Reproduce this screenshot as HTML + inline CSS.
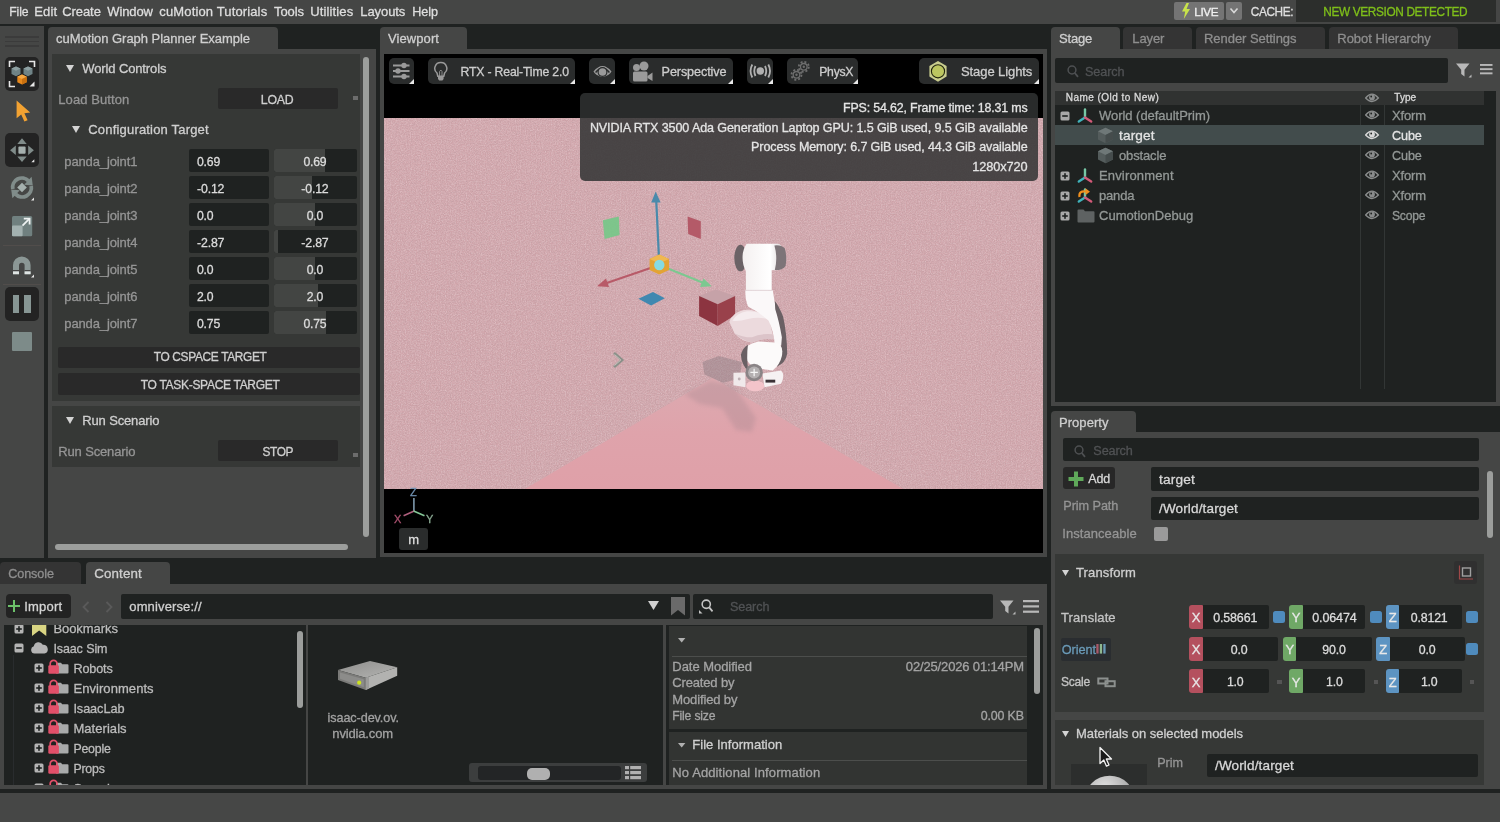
<!DOCTYPE html>
<html lang="en"><head><meta charset="utf-8"><title>Isaac Sim - cuMotion Graph Planner Example</title>
<style>
html,body{margin:0;padding:0;background:#1f2221;overflow:hidden}
body{width:1500px;height:822px;position:relative;font-family:"Liberation Sans", "DejaVu Sans", sans-serif;font-size:13px;color:#cfcfcf}
.b{position:absolute;box-sizing:border-box;display:block}
.t{position:absolute;white-space:pre;line-height:18px;height:18px;display:block;-webkit-text-stroke:0.3px}
</style></head><body>
<div class="b" id="root" style="left:0;top:0;width:1500px;height:822px;will-change:transform;overflow:hidden">
<div class="b " style="left:0px;top:0px;width:1500px;height:24px;background:#454645;"></div>
<span class="t" style="left:9.30px;top:2.70px;color:#dedede;font-size:12.2px;letter-spacing:-0.160px;">File</span>
<span class="t" style="left:34.30px;top:2.70px;color:#dedede;font-size:13px;letter-spacing:0.148px;">Edit</span>
<span class="t" style="left:62.30px;top:2.70px;color:#dedede;font-size:13px;letter-spacing:-0.089px;">Create</span>
<span class="t" style="left:107.30px;top:2.70px;color:#dedede;font-size:13px;letter-spacing:-0.125px;">Window</span>
<span class="t" style="left:159.30px;top:2.70px;color:#dedede;font-size:13px;letter-spacing:0.139px;">cuMotion Tutorials</span>
<span class="t" style="left:274.00px;top:2.70px;color:#dedede;font-size:13px;letter-spacing:-0.072px;">Tools</span>
<span class="t" style="left:310.30px;top:2.70px;color:#dedede;font-size:13px;letter-spacing:0.122px;">Utilities</span>
<span class="t" style="left:360.30px;top:2.70px;color:#dedede;font-size:13px;letter-spacing:-0.078px;">Layouts</span>
<span class="t" style="left:412.30px;top:2.70px;color:#dedede;font-size:12.6px;letter-spacing:-0.102px;">Help</span>
<div class="b " style="left:1174px;top:2px;width:50px;height:18px;background:#747474;border-radius:2px"></div>
<svg class="b" style="left:1181px;top:3px;" width="10" height="16" viewBox="0 0 10 16"><path d="M5.5 0 L1 8.5 L4.2 8.5 L2.8 16 L9 6 L5.6 6 L8 0 Z" fill="#c8e34a"/></svg>
<span class="t" style="left:1194.30px;top:2.50px;color:#f0f0f0;font-size:11.71px;letter-spacing:-0.344px;">LIVE</span>
<div class="b " style="left:1226px;top:2px;width:16px;height:18px;background:#747474;border-radius:2px"></div>
<svg class="b" style="left:1229px;top:7px;" width="10" height="8" viewBox="0 0 10 8"><path d="M1.5 1.5 L5 5.5 L8.5 1.5" stroke="#d8d8d8" stroke-width="1.6" fill="none"/></svg>
<span class="t" style="left:1250.70px;top:2.70px;color:#dedede;font-size:11.85px;letter-spacing:-0.358px;">CACHE:</span>
<div class="b " style="left:1296px;top:0px;width:199.5px;height:22px;background:#2c2e2c;"></div>
<span class="t" style="left:1323.30px;top:2.70px;color:#7fbf1a;font-size:11.85px;letter-spacing:-0.368px;">NEW VERSION DETECTED</span>
<div class="b " style="left:0px;top:26px;width:44px;height:532px;background:#454645;"></div>
<div class="b " style="left:5.4px;top:36px;width:33.4px;height:1.7px;background:#3b3b3b;"></div>
<div class="b " style="left:5.4px;top:40.6px;width:33.4px;height:1.7px;background:#3b3b3b;"></div>
<div class="b " style="left:5.4px;top:45.2px;width:33.4px;height:1.7px;background:#3b3b3b;"></div>
<div class="b " style="left:48px;top:27px;width:230px;height:23px;background:#454645;border-radius:4px 4px 0 0"></div>
<div class="b " style="left:48px;top:49px;width:328px;height:509px;background:#454645;"></div>
<span class="t" style="left:56.00px;top:29.50px;color:#cfcfcf;font-size:13px;letter-spacing:-0.037px;">cuMotion Graph Planner Example</span>
<div class="b " style="left:52px;top:54px;width:308px;height:347px;background:#363836;"></div>
<svg class="b" style="left:66px;top:65px;" width="8" height="7" viewBox="0 0 8 7"><path d="M0 0 L8 0 L4 7 Z" fill="#d4d4d4"/></svg>
<span class="t" style="left:82.30px;top:60.00px;color:#cfcfcf;font-size:13px;letter-spacing:-0.124px;">World Controls</span>
<span class="t" style="left:58.30px;top:91.00px;color:#959595;font-size:13px;letter-spacing:0.080px;">Load Button</span>
<div class="b " style="left:218.3px;top:88.3px;width:119.4px;height:21px;background:#292929;border-radius:2px"></div>
<span class="t" style="left:260.82px;top:90.60px;color:#cfcfcf;font-size:12.3px;letter-spacing:-0.250px;">LOAD</span>
<div class="b " style="left:353.3px;top:95.7px;width:4.4px;height:4.4px;background:#6c6c6c;"></div>
<svg class="b" style="left:72px;top:126px;" width="8" height="7" viewBox="0 0 8 7"><path d="M0 0 L8 0 L4 7 Z" fill="#d4d4d4"/></svg>
<span class="t" style="left:88.30px;top:121.00px;color:#cfcfcf;font-size:13px;letter-spacing:0.183px;">Configuration Target</span>
<span class="t" style="left:64.30px;top:152.70px;color:#959595;font-size:13px;letter-spacing:-0.122px;">panda_joint1</span>
<div class="b " style="left:189px;top:149.0px;width:79.7px;height:23.4px;background:#1f2221;border-radius:2px"></div>
<span class="t" style="left:197.00px;top:152.70px;color:#dcdcdc;font-size:12.22px;letter-spacing:-0.195px;">0.69</span>
<div class="b " style="left:274px;top:149.0px;width:82.7px;height:23.4px;background:#1f2221;border-radius:2px"></div>
<div class="b " style="left:274px;top:149.0px;width:51px;height:23.4px;background:#434543;border-radius:2px 0 0 2px"></div>
<span class="t" style="left:303.40px;top:152.70px;color:#dcdcdc;font-size:12.22px;letter-spacing:-0.195px;">0.69</span>
<span class="t" style="left:64.30px;top:179.70px;color:#959595;font-size:13px;letter-spacing:-0.122px;">panda_joint2</span>
<div class="b " style="left:189px;top:176.0px;width:79.7px;height:23.4px;background:#1f2221;border-radius:2px"></div>
<span class="t" style="left:197.00px;top:179.70px;color:#dcdcdc;font-size:12.32px;letter-spacing:-0.156px;">-0.12</span>
<div class="b " style="left:274px;top:176.0px;width:82.7px;height:23.4px;background:#1f2221;border-radius:2px"></div>
<div class="b " style="left:274px;top:176.0px;width:37.69999999999999px;height:23.4px;background:#434543;border-radius:2px 0 0 2px"></div>
<span class="t" style="left:301.27px;top:179.70px;color:#dcdcdc;font-size:12.32px;letter-spacing:-0.156px;">-0.12</span>
<span class="t" style="left:64.30px;top:206.70px;color:#959595;font-size:13px;letter-spacing:-0.122px;">panda_joint3</span>
<div class="b " style="left:189px;top:203.0px;width:79.7px;height:23.4px;background:#1f2221;border-radius:2px"></div>
<span class="t" style="left:197.00px;top:206.70px;color:#dcdcdc;font-size:12.2px;letter-spacing:-0.184px;">0.0</span>
<div class="b " style="left:274px;top:203.0px;width:82.7px;height:23.4px;background:#1f2221;border-radius:2px"></div>
<div class="b " style="left:274px;top:203.0px;width:41px;height:23.4px;background:#434543;border-radius:2px 0 0 2px"></div>
<span class="t" style="left:306.71px;top:206.70px;color:#dcdcdc;font-size:12.2px;letter-spacing:-0.184px;">0.0</span>
<span class="t" style="left:64.30px;top:233.70px;color:#959595;font-size:13px;letter-spacing:-0.122px;">panda_joint4</span>
<div class="b " style="left:189px;top:230.0px;width:79.7px;height:23.4px;background:#1f2221;border-radius:2px"></div>
<span class="t" style="left:197.00px;top:233.70px;color:#dcdcdc;font-size:12.32px;letter-spacing:-0.156px;">-2.87</span>
<div class="b " style="left:274px;top:230.0px;width:82.7px;height:23.4px;background:#1f2221;border-radius:2px"></div>
<div class="b " style="left:274px;top:230.0px;width:4.300000000000011px;height:23.4px;background:#434543;border-radius:2px 0 0 2px"></div>
<span class="t" style="left:301.27px;top:233.70px;color:#dcdcdc;font-size:12.32px;letter-spacing:-0.156px;">-2.87</span>
<span class="t" style="left:64.30px;top:260.70px;color:#959595;font-size:13px;letter-spacing:-0.122px;">panda_joint5</span>
<div class="b " style="left:189px;top:257.0px;width:79.7px;height:23.4px;background:#1f2221;border-radius:2px"></div>
<span class="t" style="left:197.00px;top:260.70px;color:#dcdcdc;font-size:12.2px;letter-spacing:-0.184px;">0.0</span>
<div class="b " style="left:274px;top:257.0px;width:82.7px;height:23.4px;background:#1f2221;border-radius:2px"></div>
<div class="b " style="left:274px;top:257.0px;width:41px;height:23.4px;background:#434543;border-radius:2px 0 0 2px"></div>
<span class="t" style="left:306.71px;top:260.70px;color:#dcdcdc;font-size:12.2px;letter-spacing:-0.184px;">0.0</span>
<span class="t" style="left:64.30px;top:287.70px;color:#959595;font-size:13px;letter-spacing:-0.122px;">panda_joint6</span>
<div class="b " style="left:189px;top:284.0px;width:79.7px;height:23.4px;background:#1f2221;border-radius:2px"></div>
<span class="t" style="left:197.00px;top:287.70px;color:#dcdcdc;font-size:12.2px;letter-spacing:-0.184px;">2.0</span>
<div class="b " style="left:274px;top:284.0px;width:82.7px;height:23.4px;background:#1f2221;border-radius:2px"></div>
<div class="b " style="left:274px;top:284.0px;width:44.30000000000001px;height:23.4px;background:#434543;border-radius:2px 0 0 2px"></div>
<span class="t" style="left:306.71px;top:287.70px;color:#dcdcdc;font-size:12.2px;letter-spacing:-0.184px;">2.0</span>
<span class="t" style="left:64.30px;top:314.70px;color:#959595;font-size:13px;letter-spacing:-0.122px;">panda_joint7</span>
<div class="b " style="left:189px;top:311.0px;width:79.7px;height:23.4px;background:#1f2221;border-radius:2px"></div>
<span class="t" style="left:197.00px;top:314.70px;color:#dcdcdc;font-size:12.22px;letter-spacing:-0.195px;">0.75</span>
<div class="b " style="left:274px;top:311.0px;width:82.7px;height:23.4px;background:#1f2221;border-radius:2px"></div>
<div class="b " style="left:274px;top:311.0px;width:52px;height:23.4px;background:#434543;border-radius:2px 0 0 2px"></div>
<span class="t" style="left:303.40px;top:314.70px;color:#dcdcdc;font-size:12.22px;letter-spacing:-0.195px;">0.75</span>
<div class="b " style="left:58.3px;top:346.7px;width:301.7px;height:21.6px;background:#292929;border-radius:2px"></div>
<span class="t" style="left:153.78px;top:348.30px;color:#cfcfcf;font-size:11.9px;letter-spacing:-0.334px;">TO CSPACE TARGET</span>
<div class="b " style="left:58.3px;top:373.3px;width:301.7px;height:21.7px;background:#292929;border-radius:2px"></div>
<span class="t" style="left:140.80px;top:375.70px;color:#cfcfcf;font-size:12.01px;letter-spacing:-0.300px;">TO TASK-SPACE TARGET</span>
<div class="b " style="left:52px;top:406.3px;width:308px;height:61px;background:#363836;"></div>
<svg class="b" style="left:66px;top:417px;" width="8" height="7" viewBox="0 0 8 7"><path d="M0 0 L8 0 L4 7 Z" fill="#d4d4d4"/></svg>
<span class="t" style="left:82.30px;top:411.70px;color:#cfcfcf;font-size:13px;letter-spacing:-0.148px;">Run Scenario</span>
<span class="t" style="left:58.30px;top:442.70px;color:#959595;font-size:13px;letter-spacing:-0.148px;">Run Scenario</span>
<div class="b " style="left:218.3px;top:440px;width:119.4px;height:21.3px;background:#292929;border-radius:2px"></div>
<span class="t" style="left:262.56px;top:443.00px;color:#cfcfcf;font-size:11.85px;letter-spacing:-0.387px;">STOP</span>
<div class="b " style="left:353.3px;top:452.6px;width:4.4px;height:4.4px;background:#6c6c6c;"></div>
<div class="b " style="left:363.3px;top:57px;width:5.6px;height:480.3px;background:#9c9e9c;border-radius:3px"></div>
<div class="b " style="left:55px;top:544px;width:293.3px;height:6px;background:#9c9e9c;border-radius:3px"></div>
<div class="b " style="left:4.9px;top:56.8px;width:34px;height:34.2px;background:#232323;border-radius:5px"></div>
<svg class="b" style="left:4.9px;top:56.8px;" width="34" height="34.2" viewBox="0 0 34 34.2">
<g fill="none" stroke="#e6e6e6" stroke-width="1.6"><path d="M4.5 10 V4.5 H10"/><path d="M24 4.5 H29.5 V10"/><path d="M4.5 24 V29.5 H10"/></g>
<path d="M29.5 24.5 V29.5 H24.5 Z" fill="#e6e6e6"/>
<path d="M11 9.5 L15.5 11.6 V17 L11 19.2 L6.5 17 V11.6 Z" fill="#6f8386"/><path d="M11 9.5 L15.5 11.6 L11 13.8 L6.5 11.6 Z" fill="#8ea0a2"/>
<path d="M23 9.5 L27.5 11.6 V17 L23 19.2 L18.500 17 V11.6 Z" fill="#6f8386"/><path d="M23 9.5 L27.5 11.6 L23 13.8 L18.5 11.6 Z" fill="#8ea0a2"/>
<path d="M17 17.5 L21.7 19.7 V25.2 L17 27.5 L12.3 25.2 V19.700 Z" fill="#e8891c"/><path d="M17 17.5 L21.7 19.7 L17 22 L12.3 19.7 Z" fill="#f7a944"/><path d="M17 22 L21.7 19.7 V25.2 L17 27.5 Z" fill="#c9700f"/>
</svg>
<svg class="b" style="left:14px;top:99px;" width="20" height="26" viewBox="0 0 20 26"><path d="M2.6 1.6 L2.6 19.2 L7.2 15.4 L10.4 22.6 L13.6 21.2 L10.4 14.2 L16.2 13.6 Z" fill="#f2a232"/></svg>
<div class="b " style="left:4.9px;top:132.7px;width:34px;height:34.2px;background:#232323;border-radius:5px"></div>
<svg class="b" style="left:4.9px;top:132.7px;" width="34" height="34" viewBox="0 0 34 34"><g fill="#808c8a"><path d="M17 5.300 L21.700 11 H12.300 Z"/><path d="M17 29.100 L21.700 23.400 H12.300 Z"/><path d="M5.100 17.200 L10.800 12.500 V21.900 Z"/><path d="M28.900 17.200 L23.200 12.500 V21.900 Z"/></g>
<rect x="13.400" y="13.600" width="7.200" height="7.200" rx="1" fill="#a5b0ae"/>
<path d="M29.300 26.300 V29.300 H26.300 Z" fill="#e6e6e6"/></svg>
<svg class="b" style="left:9px;top:174px;" width="26" height="28" viewBox="0 0 26 28"><g fill="none" stroke="#808c8a" stroke-width="3.800"><path d="M3.800 15 A9.200 9.200 0 0 1 19.500 6.900"/><path d="M22.200 12 A9.200 9.200 0 0 1 6.500 20.100"/></g>
<path d="M15.200 10.800 L23.800 11.600 L22.600 2.800 Z" fill="#808c8a"/><path d="M10.800 16.200 L2.200 15.400 L3.400 24.200 Z" fill="#808c8a"/>
<path d="M13 8.700 L17.800 13.500 L13 18.300 L8.200 13.500 Z" fill="#a5b0ae"/><path d="M25 23.500 V26.500 H22 Z" fill="#e6e6e6"/></svg>
<svg class="b" style="left:12px;top:215.5px;" width="21" height="21" viewBox="0 0 21 21"><rect x="0" y="0" width="20.2" height="20.2" rx="1.5" fill="#70807f"/><rect x="0" y="9.6" width="10.6" height="10.6" rx="1" fill="#a3b1b0"/>
<path d="M10.5 9.700 L17 3.2" stroke="#eef2f2" stroke-width="1.8"/><path d="M11.8 2.6 H17.6 V8.4" fill="none" stroke="#eef2f2" stroke-width="1.8"/></svg>
<div class="b " style="left:3px;top:244.6px;width:38px;height:1px;background:#514d4b;"></div>
<svg class="b" style="left:12px;top:256px;" width="22" height="22" viewBox="0 0 22 22"><path d="M1 18.2 V9.2 A8.3 8.3 0 0 1 18.6 9.2 V18.2 H12.600 V9.600 A2.8 2.8 0 0 0 7 9.600 V18.2 Z" fill="#8b9795"/>
<rect x="1" y="14" width="6" height="1.400" fill="#454545"/><rect x="12.6" y="14" width="6" height="1.400" fill="#454545"/>
<rect x="1" y="15.4" width="6" height="2.8" fill="#dfe4e3"/><rect x="12.6" y="15.4" width="6" height="2.8" fill="#dfe4e3"/><path d="M22 18.500 V21.5 H19 Z" fill="#e6e6e6"/></svg>
<div class="b " style="left:3px;top:283.5px;width:38px;height:1px;background:#514d4b;"></div>
<div class="b " style="left:4.9px;top:287.2px;width:34px;height:33.8px;background:#232323;border-radius:5px"></div>
<div class="b " style="left:12.6px;top:295px;width:6.9px;height:18.2px;background:#879694;"></div>
<div class="b " style="left:23.7px;top:295px;width:7.4px;height:18.2px;background:#879694;"></div>
<div class="b " style="left:12px;top:332.3px;width:19.7px;height:19.1px;background:#7d8b89;border-radius:1px"></div>
<div class="b " style="left:380px;top:27px;width:87px;height:23px;background:#454645;border-radius:4px 4px 0 0"></div>
<span class="t" style="left:388.00px;top:29.50px;color:#cfcfcf;font-size:13px;letter-spacing:0.082px;">Viewport</span>
<div class="b " style="left:380px;top:49px;width:667px;height:508px;background:#454645;"></div>
<div class="b " style="left:384px;top:54px;width:659px;height:499px;background:#000;"></div>
<svg class="b" style="left:384px;top:118.3px;overflow:hidden" width="659" height="370.7" viewBox="0 0 659 370.7">
<defs>
<filter id="nz" x="0" y="0" width="100%" height="100%"><feTurbulence type="fractalNoise" baseFrequency="0.9" numOctaves="2" seed="3" result="n"/><feColorMatrix in="n" type="matrix" values="0 0 0 0 0.42  0 0 0 0 0.3  0 0 0 0 0.32  0.9 0.9 0.9 0 -1.1"/></filter>
<filter id="nz2" x="0" y="0" width="100%" height="100%"><feTurbulence type="fractalNoise" baseFrequency="0.8" numOctaves="2" seed="11" result="n"/><feColorMatrix in="n" type="matrix" values="0 0 0 0 0.96  0 0 0 0 0.84  0 0 0 0 0.86  0.9 0.9 0.9 0 -1.1"/></filter>
<linearGradient id="gr" x1="0" y1="0" x2="0" y2="1"><stop offset="0" stop-color="#d1a5ab"/><stop offset="1" stop-color="#d0a4aa"/></linearGradient>
<linearGradient id="wg" x1="0" y1="0" x2="0" y2="1"><stop offset="0" stop-color="#dcaab0"/><stop offset="0.5" stop-color="#dfa3ab"/><stop offset="1" stop-color="#dfa0a8"/></linearGradient><filter id="bl"><feGaussianBlur stdDeviation="2.200"/></filter>
<linearGradient id="rb" x1="0" y1="0" x2="1" y2="0"><stop offset="0" stop-color="#f4f0f0"/><stop offset="0.7" stop-color="#ffffff"/><stop offset="1" stop-color="#dcd6d8"/></linearGradient>
</defs>
<rect width="659" height="371" fill="url(#gr)"/>
<rect width="659" height="371" filter="url(#nz)" opacity="0.4"/>
<rect width="659" height="371" filter="url(#nz2)" opacity="0.4"/>
<path d="M141 371 L328.600 260.100 L519.200 371 Z" fill="url(#wg)"/>
<path d="M300 276 L327 263 L350 268 L372 300 L368 314 L352 312 L338 290 L316 286 Z" fill="#9a8088" opacity="0.28" filter="url(#bl)"/>
<!-- gizmo -->
<path d="M272.300 84 L275 140" stroke="#4a8aab" stroke-width="2.200"/><path d="M271.700 73.500 L276.600 84.500 H267.200 Z" fill="#4a8aab"/>
<path d="M268 149.500 L222 165.200" stroke="#b85a68" stroke-width="2"/><path d="M213 168.200 L222 160.500 L225 169 Z" fill="#b85a68"/>
<path d="M284 150.500 L319 164.800" stroke="#7cc890" stroke-width="2"/><path d="M327.800 168.200 L316 169 L319.500 160.500 Z" fill="#7cc890"/>
<path d="M218.800 102.300 L234.800 98.600 L235.600 116.900 L220.600 121.100 Z" fill="#74c887" opacity="0.9"/>
<path d="M303.600 98.600 L316.800 103.200 V121.100 L304.200 116 Z" fill="#b45a68"/>
<path d="M254.400 180.700 L269 174 L280.800 180.200 L267.100 187.500 Z" fill="#4088b0"/>
<path d="M275.300 136.500 L285 141 V152 L275.300 156.500 L265.600 152 V141 Z" fill="#e3a334"/><path d="M275.300 136.500 L285 141 L275.300 145.500 L265.600 141 Z" fill="#f0b850"/>
<circle cx="275.300" cy="147" r="5.200" fill="#86dbe3"/>
<!-- obstacle cube -->
<path d="M315.100 178 L331.900 171.600 L351.100 178 L333.700 186.200 Z" fill="#c6a2a8"/><path d="M315.100 178 L333.700 186.200 V208.100 L315.100 198.100 Z" fill="#8c3440"/><path d="M333.700 186.200 L351.100 178 V197.200 L333.700 208.100 Z" fill="#99414b"/>
<!-- robot -->
<g transform="translate(306,111.7) scale(0.2069)">
<path d="M60 640 L140 610 L250 640 L240 720 L160 740 L70 700 Z" fill="#8a7a80" opacity="0.45"/>
<path d="M190 445 Q205 400 260 388 Q330 380 385 440 L405 530 Q350 520 300 545 Q250 540 215 500 Z" fill="#ecdadd"/>
<path d="M205 440 Q225 402 275 394 Q335 390 380 432 Q330 420 280 432 Q235 445 205 440 Z" fill="#f5ecee"/><path d="M215 500 Q250 535 300 545 Q350 522 405 530 L400 505 Q340 500 300 520 Q250 520 215 500 Z" fill="#dcc4c9"/>
<ellipse cx="244" cy="137" rx="30" ry="64" fill="#6b6266"/>
<path d="M274 68 H425 Q445 70 445 100 V170 Q445 196 425 196 H395 V292 H270 V200 Q254 170 254 135 Q254 95 274 68 Z" fill="url(#rb)"/>
<path d="M408 76 Q440 72 458 90 Q470 130 462 175 Q450 196 410 195 Q425 135 408 76 Z" fill="#7d7478"/>
<path d="M268 293 H400 Q408 350 420 400 Q445 450 455 520 L462 560 L410 560 Q405 490 380 440 Q330 395 282 372 Q266 340 268 293 Z" fill="#fbf8f9"/>
<path d="M268 293 H400" stroke="#d9cfd2" stroke-width="3"/>
<path d="M410 345 Q430 370 450 420 Q468 500 470 600 Q462 645 420 662 Q440 600 444 520 Q430 440 412 385 Z" fill="#6a6064"/>
<path d="M250 600 Q262 555 330 540 L410 545 Q455 552 444 610 Q436 650 400 680 L340 672 L290 650 Z" fill="#fcfafa"/>
<path d="M246 605 Q255 570 280 556 Q272 620 282 682 Q250 660 246 605 Z" fill="#6a6064"/>
<path d="M210 692 L268 690 L268 762 L210 752 Z" fill="#f0e9ea"/><circle cx="238" cy="722" r="7" fill="#bdb0b4"/>
<path d="M350 695 L440 680 Q462 700 440 745 L360 762 Z" fill="#f6f1f2"/>
<rect x="365" y="725" width="47" height="14" fill="#3a3236"/>
<ellipse cx="315" cy="755" rx="44" ry="26" fill="#f3c4ca"/>
<circle cx="310" cy="690" r="42" fill="#8a8486"/><circle cx="310" cy="690" r="29" fill="#b4b0b1"/><path d="M292 690 H328 M310 672 V708" stroke="#f6f6f6" stroke-width="6"/>
</g>
<path d="M230 235 L238 242 L230 249" stroke="#8b9089" stroke-width="2.800" fill="none"/><path d="M230.500 236.500 L236.800 242 L230.500 247.500" stroke="#cfc8c4" stroke-width="0.900" fill="none"/>
</svg>
<div class="b " style="left:580px;top:92.8px;width:458px;height:88px;background:rgba(48,50,50,0.85);border-radius:5px"></div>
<span class="t" style="left:843.05px;top:98.50px;color:#e4e4e4;font-size:12.39px;letter-spacing:-0.145px;">FPS: 54.62, Frame time: 18.31 ms</span>
<span class="t" style="left:589.90px;top:118.60px;color:#e4e4e4;font-size:12.56px;letter-spacing:-0.105px;">NVIDIA RTX 3500 Ada Generation Laptop GPU: 1.5 GiB used, 9.5 GiB available</span>
<span class="t" style="left:751.09px;top:137.90px;color:#e4e4e4;font-size:12.53px;letter-spacing:-0.109px;">Process Memory: 6.7 GiB used, 44.3 GiB available</span>
<span class="t" style="left:972.23px;top:158.00px;color:#e4e4e4;font-size:12.74px;letter-spacing:-0.069px;">1280x720</span>
<div class="b " style="left:388.5px;top:58px;width:25.4px;height:25.8px;background:#2a2c2c;border-radius:5px"></div>
<svg class="b" style="left:408.9px;top:78.8px;" width="5" height="5" viewBox="0 0 5 5"><path d="M5 0 V5 H0 Z" fill="#e8e8e8"/></svg>
<div class="b " style="left:428px;top:58px;width:147.2px;height:25.8px;background:#2a2c2c;border-radius:5px"></div>
<svg class="b" style="left:570.2px;top:78.8px;" width="5" height="5" viewBox="0 0 5 5"><path d="M5 0 V5 H0 Z" fill="#e8e8e8"/></svg>
<div class="b " style="left:589.1px;top:58px;width:26.1px;height:25.8px;background:#2a2c2c;border-radius:5px"></div>
<svg class="b" style="left:610.2px;top:78.8px;" width="5" height="5" viewBox="0 0 5 5"><path d="M5 0 V5 H0 Z" fill="#e8e8e8"/></svg>
<div class="b " style="left:629.3px;top:58px;width:104px;height:25.8px;background:#2a2c2c;border-radius:5px"></div>
<svg class="b" style="left:728.3px;top:78.8px;" width="5" height="5" viewBox="0 0 5 5"><path d="M5 0 V5 H0 Z" fill="#e8e8e8"/></svg>
<div class="b " style="left:747.2px;top:58px;width:25.9px;height:25.8px;background:#2a2c2c;border-radius:5px"></div>
<svg class="b" style="left:768.1px;top:78.8px;" width="5" height="5" viewBox="0 0 5 5"><path d="M5 0 V5 H0 Z" fill="#e8e8e8"/></svg>
<div class="b " style="left:787.2px;top:58px;width:71.2px;height:25.8px;background:#2a2c2c;border-radius:5px"></div>
<svg class="b" style="left:853.4000000000001px;top:78.8px;" width="5" height="5" viewBox="0 0 5 5"><path d="M5 0 V5 H0 Z" fill="#e8e8e8"/></svg>
<div class="b " style="left:919.2px;top:58px;width:119.8px;height:25.8px;background:#2a2c2c;border-radius:5px"></div>
<svg class="b" style="left:1034.0px;top:78.8px;" width="5" height="5" viewBox="0 0 5 5"><path d="M5 0 V5 H0 Z" fill="#e8e8e8"/></svg>
<svg class="b" style="left:392px;top:61px;" width="19" height="20" viewBox="0 0 19 20"><g stroke="#9a9a9a" stroke-width="1.800"><path d="M1 4.500 H17.500 M1 10 H17.500 M1 15.500 H17.500"/></g><g fill="#9a9a9a"><circle cx="12" cy="4.500" r="2.700"/><circle cx="6" cy="10" r="2.700"/><circle cx="12" cy="15.500" r="2.700"/></g></svg>
<svg class="b" style="left:433px;top:61px;" width="16" height="21" viewBox="0 0 16 21"><path d="M7.800 1.500 A5.900 5.900 0 0 0 4 12 L4.800 15.200 H10.800 L11.600 12 A5.900 5.900 0 0 0 7.800 1.500 Z" fill="none" stroke="#9a9a9a" stroke-width="1.500"/><path d="M5 15.500 H10.600 V18 L9.400 19.500 H6.200 L5 18 Z" fill="#9a9a9a"/><path d="M6.600 15 V10.500 L7.800 9 L9 10.500 V15" fill="none" stroke="#9a9a9a" stroke-width="0.900"/></svg>
<span class="t" style="left:460.50px;top:62.80px;color:#cdcdcd;font-size:12.26px;letter-spacing:-0.176px;">RTX - Real-Time 2.0</span>
<svg class="b" style="left:592.5px;top:62.5px;" width="20" height="18" viewBox="0 0 20 18"><path d="M0.500 8.500 Q9.500 -2.500 18.500 8.500 Q17.500 10.500 15.500 11.800 Q9.500 16 3.500 11.800 Q1.500 10.500 0.500 8.500 Z" fill="#9a9a9a"/><path d="M2.600 9.400 Q9.500 1.300 16.400 9.400" stroke="#2a2c2c" stroke-width="1.500" fill="none"/><circle cx="9.500" cy="9" r="5" fill="#2a2c2c"/><circle cx="9.500" cy="9" r="3.800" fill="#9a9a9a"/></svg>
<svg class="b" style="left:631.5px;top:60.5px;" width="22" height="22" viewBox="0 0 22 22"><g fill="#9a9a9a"><circle cx="4.500" cy="6.500" r="3.500"/><circle cx="12" cy="5" r="4.500"/><rect x="1" y="10.500" width="14.500" height="10" rx="1.500"/><path d="M15.500 15 L20.500 11.500 V20 L15.500 17 Z"/></g></svg>
<span class="t" style="left:661.60px;top:62.80px;color:#cdcdcd;font-size:12.61px;letter-spacing:-0.099px;">Perspective</span>
<svg class="b" style="left:749px;top:62px;" width="23" height="18" viewBox="0 0 23 18"><circle cx="11.300" cy="9" r="3.700" fill="#b0b0b0"/><g fill="none" stroke="#b0b0b0" stroke-width="1.800"><path d="M6.500 4 Q4 9 6.500 14"/><path d="M16 4 Q18.500 9 16 14"/><path d="M3.300 2.500 Q-0.200 9 3.300 15.500"/><path d="M19.300 2.500 Q22.800 9 19.300 15.500"/></g></svg>
<svg class="b" style="left:790px;top:60px;" width="22" height="22" viewBox="0 0 22 22"><g fill="none" stroke="#6e6e6e"><circle cx="13.800" cy="6.800" r="3.300" stroke-width="1.300"/><circle cx="13.800" cy="6.800" r="5" stroke-width="1.800" stroke-dasharray="2 1.930"/><circle cx="6.500" cy="14.800" r="3.300" stroke-width="1.300"/><circle cx="6.500" cy="14.800" r="5" stroke-width="1.800" stroke-dasharray="2 1.930"/></g><circle cx="13.800" cy="6.800" r="1.200" fill="#6e6e6e"/><circle cx="6.500" cy="14.800" r="1.200" fill="#6e6e6e"/></svg>
<span class="t" style="left:819.20px;top:62.80px;color:#cdcdcd;font-size:12.2px;letter-spacing:-0.227px;">PhysX</span>
<svg class="b" style="left:927.5px;top:59.5px;" width="20" height="23" viewBox="0 0 20 23"><path d="M10 1 L18.600 6 V16.500 L10 21.800 L1.400 16.500 V6 Z" fill="#c9cd8e"/><circle cx="10" cy="11.300" r="6.600" fill="#bcc660" stroke="#23260f" stroke-width="1.100"/></svg>
<span class="t" style="left:961.00px;top:62.80px;color:#cdcdcd;font-size:13px;letter-spacing:-0.082px;">Stage Lights</span>
<svg class="b" style="left:390px;top:484px;" width="50" height="44" viewBox="0 0 50 44"><path d="M23.900 14 V27" stroke="#7e99ad" stroke-width="1.600"/><path d="M24.200 27 L13.600 31.700" stroke="#b0607e" stroke-width="1.600"/><path d="M23.600 27 L34.500 31.700" stroke="#84c596" stroke-width="1.600"/></svg>
<span class="t" style="left:409.93px;top:482.50px;color:#6f90b0;font-size:11px;">Z</span>
<span class="t" style="left:394.03px;top:509.60px;color:#a8506e;font-size:11px;">X</span>
<span class="t" style="left:426.03px;top:509.60px;color:#8aa992;font-size:11px;">Y</span>
<div class="b " style="left:399.1px;top:528.1px;width:28.7px;height:21.7px;background:#2a2c2c;border-radius:3px"></div>
<span class="t" style="left:408.18px;top:531.00px;color:#dedede;font-size:13px;">m</span>
<div class="b " style="left:1051px;top:27px;width:69px;height:23px;background:#454645;border-radius:4px 4px 0 0"></div>
<span class="t" style="left:1059.00px;top:29.50px;color:#cfcfcf;font-size:13px;letter-spacing:-0.197px;">Stage</span>
<div class="b " style="left:1123.3px;top:27px;width:69px;height:22px;background:#343434;border-radius:4px 4px 0 0"></div>
<span class="t" style="left:1132.30px;top:29.50px;color:#8e8e8e;font-size:13px;letter-spacing:-0.106px;">Layer</span>
<div class="b " style="left:1195.7px;top:27px;width:129.3px;height:22px;background:#343434;border-radius:4px 4px 0 0"></div>
<span class="t" style="left:1204.00px;top:29.50px;color:#8e8e8e;font-size:13px;letter-spacing:-0.049px;">Render Settings</span>
<div class="b " style="left:1329px;top:27px;width:128.7px;height:22px;background:#343434;border-radius:4px 4px 0 0"></div>
<span class="t" style="left:1337.30px;top:29.50px;color:#8e8e8e;font-size:13px;letter-spacing:-0.029px;">Robot Hierarchy</span>
<div class="b " style="left:1051px;top:49px;width:449px;height:357px;background:#454645;"></div>
<div class="b " style="left:1055px;top:58.3px;width:392.7px;height:25px;background:#1f2221;border-radius:2px"></div>
<svg class="b" style="left:1066.5px;top:65px;" width="12.0" height="13.0" viewBox="0 0 12 13"><circle cx="5" cy="5" r="3.900" fill="none" stroke="#4e5052" stroke-width="1.500"/><path d="M7.800 8 L11 11.800" stroke="#4e5052" stroke-width="1.800"/></svg>
<span class="t" style="left:1085.00px;top:62.50px;color:#505254;font-size:12.65px;letter-spacing:-0.094px;">Search</span>
<svg class="b" style="left:1456px;top:63.3px;" width="16" height="16" viewBox="0 0 16 16"><path d="M0 0.500 H13.500 L8.500 6.800 V13.500 L5.200 11 V6.800 Z" fill="#b8b8b8"/><path d="M15.500 11.500 V14.500 H12.500 Z" fill="#b8b8b8"/></svg>
<svg class="b" style="left:1480px;top:63.6px;" width="12.5" height="11.3" viewBox="0 0 12.5 11.3"><rect x="0" y="0.0" width="12.5" height="1.9" fill="#b8b8b8"/><rect x="0" y="4.2" width="12.5" height="1.9" fill="#b8b8b8"/><rect x="0" y="8.4" width="12.5" height="1.9" fill="#b8b8b8"/></svg>
<div class="b " style="left:1055px;top:90.7px;width:441px;height:311px;background:#1f2221;"></div>
<div class="b " style="left:1055px;top:90.7px;width:429px;height:14.6px;background:#303231;"></div>
<span class="t" style="left:1065.70px;top:89.20px;color:#dadada;font-size:10px;letter-spacing:0.472px;">Name (Old to New)</span>
<span class="t" style="left:1394.30px;top:89.20px;color:#dadada;font-size:10px;letter-spacing:0.028px;">Type</span>
<div class="b " style="left:1360.4px;top:105px;width:1px;height:284px;background:#323635;"></div>
<div class="b " style="left:1384px;top:105px;width:1px;height:284px;background:#323635;"></div>
<div class="b " style="left:1055px;top:125.2px;width:429px;height:19.9px;background:#424c4c;"></div>
<span class="t" style="left:1099.00px;top:106.70px;color:#939896;font-size:13px;letter-spacing:-0.039px;">World (defaultPrim)</span>
<span class="t" style="left:1392.00px;top:106.70px;color:#939896;font-size:13px;letter-spacing:-0.134px;">Xform</span>
<svg class="b" style="left:1365px;top:110.0px;" width="15" height="10" viewBox="0 0 15 10"><path d="M0.600 5 Q7 -2.800 13.400 5 Q7 12 0.600 5 Z" fill="none" stroke="#8a8c8c" stroke-width="1.300"/><circle cx="7" cy="4.500" r="2.900" fill="#8a8c8c"/><circle cx="6.200" cy="3.500" r="0.900" fill="#1f2221"/></svg>
<svg class="b" style="left:1060.3px;top:110.7px;" width="10" height="10" viewBox="0 0 10 10"><rect x="0.500" y="0.500" width="9" height="9" rx="1.500" fill="#a8a8a8"/><rect x="2.200" y="4.200" width="5.600" height="1.600" fill="#1f2221"/></svg>
<svg class="b" style="left:1076.7px;top:107.7px;" width="16" height="16" viewBox="0 0 16 16"><path d="M8 1.500 V9.500" stroke="#76c8a6" stroke-width="2.400" stroke-linecap="round"/><path d="M8 9.500 L1.800 13.500" stroke="#3fb2ba" stroke-width="2.400" stroke-linecap="round"/><path d="M8 9.500 L14.200 13.500" stroke="#d25a78" stroke-width="2.400" stroke-linecap="round"/></svg>
<span class="t" style="left:1119.00px;top:126.70px;color:#e4e4e4;font-size:13.61px;letter-spacing:0.148px;">target</span>
<span class="t" style="left:1392.00px;top:126.70px;color:#e4e4e4;font-size:12.62px;letter-spacing:-0.114px;">Cube</span>
<svg class="b" style="left:1365px;top:130.0px;" width="15" height="10" viewBox="0 0 15 10"><path d="M0.600 5 Q7 -2.800 13.400 5 Q7 12 0.600 5 Z" fill="none" stroke="#d8d8d8" stroke-width="1.300"/><circle cx="7" cy="4.500" r="2.900" fill="#d8d8d8"/><circle cx="6.200" cy="3.500" r="0.900" fill="#1f2221"/></svg>
<svg class="b" style="left:1096.7px;top:127.19999999999999px;" width="17" height="17" viewBox="0 0 17 17"><path d="M8.500 0.800 L16 4.300 V12.500 L8.500 16.300 L1 12.500 V4.300 Z" fill="#545c5c"/><path d="M8.500 0.800 L16 4.300 L8.500 8 L1 4.300 Z" fill="#6f7878"/><path d="M8.500 8 L16 4.300 V12.500 L8.500 16.300 Z" fill="#454c4c"/></svg>
<span class="t" style="left:1119.00px;top:146.70px;color:#939896;font-size:13px;letter-spacing:-0.140px;">obstacle</span>
<span class="t" style="left:1392.00px;top:146.70px;color:#939896;font-size:12.62px;letter-spacing:-0.114px;">Cube</span>
<svg class="b" style="left:1365px;top:150.0px;" width="15" height="10" viewBox="0 0 15 10"><path d="M0.600 5 Q7 -2.800 13.400 5 Q7 12 0.600 5 Z" fill="none" stroke="#8a8c8c" stroke-width="1.300"/><circle cx="7" cy="4.500" r="2.900" fill="#8a8c8c"/><circle cx="6.200" cy="3.500" r="0.900" fill="#1f2221"/></svg>
<svg class="b" style="left:1096.7px;top:147.2px;" width="17" height="17" viewBox="0 0 17 17"><path d="M8.500 0.800 L16 4.300 V12.500 L8.500 16.300 L1 12.500 V4.300 Z" fill="#545c5c"/><path d="M8.500 0.800 L16 4.300 L8.500 8 L1 4.300 Z" fill="#6f7878"/><path d="M8.500 8 L16 4.300 V12.500 L8.500 16.300 Z" fill="#454c4c"/></svg>
<span class="t" style="left:1099.00px;top:166.70px;color:#939896;font-size:13px;letter-spacing:0.156px;">Environment</span>
<span class="t" style="left:1392.00px;top:166.70px;color:#939896;font-size:13px;letter-spacing:-0.134px;">Xform</span>
<svg class="b" style="left:1365px;top:170.0px;" width="15" height="10" viewBox="0 0 15 10"><path d="M0.600 5 Q7 -2.800 13.400 5 Q7 12 0.600 5 Z" fill="none" stroke="#8a8c8c" stroke-width="1.300"/><circle cx="7" cy="4.500" r="2.900" fill="#8a8c8c"/><circle cx="6.200" cy="3.500" r="0.900" fill="#1f2221"/></svg>
<svg class="b" style="left:1060.3px;top:170.7px;" width="10" height="10" viewBox="0 0 10 10"><rect x="0.500" y="0.500" width="9" height="9" rx="1.500" fill="#a8a8a8"/><rect x="2.200" y="4.200" width="5.600" height="1.600" fill="#1f2221"/><rect x="4.200" y="2.200" width="1.600" height="5.600" fill="#1f2221"/></svg>
<svg class="b" style="left:1076.7px;top:167.7px;" width="16" height="16" viewBox="0 0 16 16"><path d="M8 1.500 V9.500" stroke="#76c8a6" stroke-width="2.400" stroke-linecap="round"/><path d="M8 9.500 L1.800 13.500" stroke="#3fb2ba" stroke-width="2.400" stroke-linecap="round"/><path d="M8 9.500 L14.200 13.500" stroke="#d25a78" stroke-width="2.400" stroke-linecap="round"/></svg>
<span class="t" style="left:1099.00px;top:186.70px;color:#939896;font-size:13px;letter-spacing:-0.171px;">panda</span>
<span class="t" style="left:1392.00px;top:186.70px;color:#939896;font-size:13px;letter-spacing:-0.134px;">Xform</span>
<svg class="b" style="left:1365px;top:190.0px;" width="15" height="10" viewBox="0 0 15 10"><path d="M0.600 5 Q7 -2.800 13.400 5 Q7 12 0.600 5 Z" fill="none" stroke="#8a8c8c" stroke-width="1.300"/><circle cx="7" cy="4.500" r="2.900" fill="#8a8c8c"/><circle cx="6.200" cy="3.500" r="0.900" fill="#1f2221"/></svg>
<svg class="b" style="left:1060.3px;top:190.7px;" width="10" height="10" viewBox="0 0 10 10"><rect x="0.500" y="0.500" width="9" height="9" rx="1.500" fill="#a8a8a8"/><rect x="2.200" y="4.200" width="5.600" height="1.600" fill="#1f2221"/><rect x="4.200" y="2.200" width="1.600" height="5.600" fill="#1f2221"/></svg>
<svg class="b" style="left:1076.7px;top:187.7px;" width="16" height="16" viewBox="0 0 16 16"><path d="M8 1.500 V9.500" stroke="#76c8a6" stroke-width="2.400" stroke-linecap="round"/><path d="M8 9.500 L1.800 13.500" stroke="#3fb2ba" stroke-width="2.400" stroke-linecap="round"/><path d="M8 9.500 L14.200 13.500" stroke="#d25a78" stroke-width="2.400" stroke-linecap="round"/><path d="M2.500 9 Q1.500 2.500 9 3.500" stroke="#f0901e" stroke-width="2.200" fill="none"/><path d="M8.500 0.300 L13 3.800 L8.500 7 Z" fill="#f0901e"/></svg>
<span class="t" style="left:1099.00px;top:206.70px;color:#939896;font-size:13px;letter-spacing:0.027px;">CumotionDebug</span>
<span class="t" style="left:1392.00px;top:206.70px;color:#939896;font-size:12.17px;letter-spacing:-0.234px;">Scope</span>
<svg class="b" style="left:1365px;top:210.0px;" width="15" height="10" viewBox="0 0 15 10"><path d="M0.600 5 Q7 -2.800 13.400 5 Q7 12 0.600 5 Z" fill="none" stroke="#8a8c8c" stroke-width="1.300"/><circle cx="7" cy="4.500" r="2.900" fill="#8a8c8c"/><circle cx="6.200" cy="3.500" r="0.900" fill="#1f2221"/></svg>
<svg class="b" style="left:1060.3px;top:210.7px;" width="10" height="10" viewBox="0 0 10 10"><rect x="0.500" y="0.500" width="9" height="9" rx="1.500" fill="#a8a8a8"/><rect x="2.200" y="4.200" width="5.600" height="1.600" fill="#1f2221"/><rect x="4.200" y="2.200" width="1.600" height="5.600" fill="#1f2221"/></svg>
<svg class="b" style="left:1076.7px;top:208.7px;" width="18" height="14" viewBox="0 0 18 14"><path d="M0.500 1.500 Q0.500 0.500 1.500 0.500 H6.500 L8 2.300 H16.500 Q17.500 2.300 17.500 3.300 V12.500 Q17.500 13.500 16.500 13.500 H1.500 Q0.500 13.500 0.500 12.500 Z" fill="#5e6262"/></svg>
<svg class="b" style="left:1365px;top:92.5px;" width="15" height="10" viewBox="0 0 15 10"><path d="M0.600 5 Q7 -2.800 13.400 5 Q7 12 0.600 5 Z" fill="none" stroke="#8a8c8c" stroke-width="1.300"/><circle cx="7" cy="4.500" r="2.900" fill="#8a8c8c"/><circle cx="6.200" cy="3.500" r="0.900" fill="#1f2221"/></svg>
<div class="b " style="left:1051px;top:411.3px;width:84.7px;height:22px;background:#454645;border-radius:4px 4px 0 0"></div>
<span class="t" style="left:1059.00px;top:414.00px;color:#cfcfcf;font-size:13px;letter-spacing:0.045px;">Property</span>
<div class="b " style="left:1050.7px;top:432.3px;width:449.3px;height:356.4px;background:#454645;"></div>
<div class="b " style="left:1062.7px;top:438.3px;width:416.3px;height:23px;background:#1f2221;border-radius:2px"></div>
<svg class="b" style="left:1074.3px;top:444.5px;" width="12.0" height="13.0" viewBox="0 0 12 13"><circle cx="5" cy="5" r="3.900" fill="none" stroke="#4e5052" stroke-width="1.500"/><path d="M7.800 8 L11 11.800" stroke="#4e5052" stroke-width="1.800"/></svg>
<span class="t" style="left:1093.30px;top:441.50px;color:#505254;font-size:12.65px;letter-spacing:-0.094px;">Search</span>
<div class="b " style="left:1062.7px;top:467.3px;width:52.3px;height:21.7px;background:#272727;border-radius:3px"></div>
<svg class="b" style="left:1068px;top:470.5px;" width="16" height="16" viewBox="0 0 16 16"><path d="M6 0.500 H10 V6 H15.500 V10 H10 V15.500 H6 V10 H0.500 V6 H6 Z" fill="#5fa85a"/></svg>
<span class="t" style="left:1088.30px;top:469.50px;color:#d8d8d8;font-size:12.47px;letter-spacing:-0.163px;">Add</span>
<div class="b " style="left:1151px;top:467.3px;width:328px;height:23.4px;background:#1f2221;border-radius:2px"></div>
<span class="t" style="left:1159.00px;top:470.50px;color:#d8d8d8;font-size:13.69px;letter-spacing:0.164px;">target</span>
<span class="t" style="left:1063.30px;top:496.70px;color:#959595;font-size:12.69px;letter-spacing:-0.078px;">Prim Path</span>
<div class="b " style="left:1151px;top:496.7px;width:328px;height:23px;background:#1f2221;border-radius:2px"></div>
<span class="t" style="left:1159.00px;top:499.50px;color:#d8d8d8;font-size:13.54px;letter-spacing:0.137px;">/World/target</span>
<span class="t" style="left:1062.30px;top:525.00px;color:#959595;font-size:13px;letter-spacing:0.055px;">Instanceable</span>
<div class="b " style="left:1154px;top:527.3px;width:14px;height:13.4px;background:#9a9a9a;border-radius:2px"></div>
<div class="b " style="left:1487.3px;top:470.7px;width:5.4px;height:67.6px;background:#9c9e9c;border-radius:3px"></div>
<div class="b " style="left:1055px;top:554px;width:429px;height:158.3px;background:#363836;"></div>
<svg class="b" style="left:1061.5px;top:570px;" width="7" height="6" viewBox="0 0 7 6"><path d="M0 0 H7 L3.500 6 Z" fill="#d4d4d4"/></svg>
<span class="t" style="left:1076.00px;top:564.00px;color:#cfcfcf;font-size:13px;letter-spacing:0.139px;">Transform</span>
<div class="b " style="left:1454px;top:561.3px;width:23.3px;height:22.7px;background:#303030;border-radius:3px"></div>
<svg class="b" style="left:1458px;top:565px;" width="16" height="16" viewBox="0 0 16 16"><rect x="4.500" y="3" width="8" height="8" fill="none" stroke="#a0a0a0" stroke-width="1.400"/><path d="M1.500 0.500 V14 H15" fill="none" stroke="#a04848" stroke-width="1.200"/></svg>
<span class="t" style="left:1061.00px;top:609.00px;color:#c4c4c4;font-size:13px;letter-spacing:0.109px;">Translate</span>
<div class="b " style="left:1201px;top:605.0px;width:67.70000000000005px;height:23.7px;background:#1f2221;border-radius:0 2px 2px 0"></div>
<div class="b " style="left:1189px;top:605.0px;width:13.7px;height:23.7px;background:#b4505e;border-radius:3px 1px 1px 3px"></div>
<span class="t" style="left:1191.81px;top:609.20px;color:#e8e8e8;font-size:13px;">X</span>
<span class="t" style="left:1213.23px;top:608.70px;color:#dcdcdc;font-size:12.45px;letter-spacing:-0.138px;">0.58661</span>
<div class="b " style="left:1301px;top:605.0px;width:64px;height:23.7px;background:#1f2221;border-radius:0 2px 2px 0"></div>
<div class="b " style="left:1289px;top:605.0px;width:13.7px;height:23.7px;background:#6fa866;border-radius:3px 1px 1px 3px"></div>
<span class="t" style="left:1291.81px;top:609.20px;color:#e8e8e8;font-size:13px;">Y</span>
<span class="t" style="left:1312.24px;top:608.70px;color:#dcdcdc;font-size:12.53px;letter-spacing:-0.121px;">0.06474</span>
<div class="b " style="left:1397.7px;top:605.0px;width:64.0px;height:23.7px;background:#1f2221;border-radius:0 2px 2px 0"></div>
<div class="b " style="left:1385.7px;top:605.0px;width:13.7px;height:23.7px;background:#5d94c2;border-radius:3px 1px 1px 3px"></div>
<span class="t" style="left:1388.87px;top:609.20px;color:#e8e8e8;font-size:13px;">Z</span>
<span class="t" style="left:1410.87px;top:608.70px;color:#dcdcdc;font-size:12.34px;letter-spacing:-0.170px;">0.8121</span>
<div class="b " style="left:1273.3px;top:611.2px;width:11.7px;height:11.7px;background:#4f8bbd;border-radius:2.500px"></div>
<div class="b " style="left:1370px;top:611.2px;width:11.7px;height:11.7px;background:#4f8bbd;border-radius:2.500px"></div>
<div class="b " style="left:1466px;top:611.2px;width:11.7px;height:11.7px;background:#4f8bbd;border-radius:2.500px"></div>
<div class="b " style="left:1061px;top:638px;width:49.7px;height:22.7px;background:#2a2d30;border-radius:2px"></div>
<span class="t" style="left:1061.70px;top:641.00px;color:#6a9ab8;font-size:12.73px;letter-spacing:-0.057px;">Orient</span>
<svg class="b" style="left:1096px;top:644px;" width="11" height="10" viewBox="0 0 11 10"><rect x="0.300" y="0" width="2.300" height="9.600" fill="#a85a6a"/><rect x="3.800" y="0" width="2.300" height="9.600" fill="#8fb890"/><rect x="7.300" y="0" width="2.300" height="9.600" fill="#6a9ab8"/></svg>
<div class="b " style="left:1201px;top:637.0px;width:76.70000000000005px;height:23.7px;background:#1f2221;border-radius:0 2px 2px 0"></div>
<div class="b " style="left:1189px;top:637.0px;width:13.7px;height:23.7px;background:#b4505e;border-radius:3px 1px 1px 3px"></div>
<span class="t" style="left:1191.81px;top:641.20px;color:#e8e8e8;font-size:13px;">X</span>
<span class="t" style="left:1230.87px;top:640.70px;color:#dcdcdc;font-size:12.35px;letter-spacing:-0.157px;">0.0</span>
<div class="b " style="left:1294.7px;top:637.0px;width:77.0px;height:23.7px;background:#1f2221;border-radius:0 2px 2px 0"></div>
<div class="b " style="left:1282.7px;top:637.0px;width:13.7px;height:23.7px;background:#6fa866;border-radius:3px 1px 1px 3px"></div>
<span class="t" style="left:1285.51px;top:641.20px;color:#e8e8e8;font-size:13px;">Y</span>
<span class="t" style="left:1322.22px;top:640.70px;color:#dcdcdc;font-size:12.35px;letter-spacing:-0.158px;">90.0</span>
<div class="b " style="left:1388px;top:637.0px;width:77px;height:23.7px;background:#1f2221;border-radius:0 2px 2px 0"></div>
<div class="b " style="left:1376px;top:637.0px;width:13.7px;height:23.7px;background:#5d94c2;border-radius:3px 1px 1px 3px"></div>
<span class="t" style="left:1379.17px;top:641.20px;color:#e8e8e8;font-size:13px;">Z</span>
<span class="t" style="left:1418.87px;top:640.70px;color:#dcdcdc;font-size:12.35px;letter-spacing:-0.157px;">0.0</span>
<div class="b " style="left:1466px;top:643.2px;width:11.7px;height:11.7px;background:#4f8bbd;border-radius:2.500px"></div>
<span class="t" style="left:1061.00px;top:673.00px;color:#c4c4c4;font-size:12.06px;letter-spacing:-0.228px;">Scale</span>
<svg class="b" style="left:1097px;top:676.5px;" width="20" height="11" viewBox="0 0 20 11"><g fill="none" stroke="#8c908e" stroke-width="2"><rect x="1.300" y="1.500" width="9.200" height="5"/><rect x="8.500" y="4.200" width="9.200" height="5"/></g></svg>
<div class="b " style="left:1201px;top:669.3px;width:67.70000000000005px;height:23.7px;background:#1f2221;border-radius:0 2px 2px 0"></div>
<div class="b " style="left:1189px;top:669.3px;width:13.7px;height:23.7px;background:#b4505e;border-radius:3px 1px 1px 3px"></div>
<span class="t" style="left:1191.81px;top:673.50px;color:#e8e8e8;font-size:13px;">X</span>
<span class="t" style="left:1226.92px;top:673.00px;color:#dcdcdc;font-size:12.3px;letter-spacing:-0.170px;">1.0</span>
<div class="b " style="left:1301px;top:669.3px;width:64px;height:23.7px;background:#1f2221;border-radius:0 2px 2px 0"></div>
<div class="b " style="left:1289px;top:669.3px;width:13.7px;height:23.7px;background:#6fa866;border-radius:3px 1px 1px 3px"></div>
<span class="t" style="left:1291.81px;top:673.50px;color:#e8e8e8;font-size:13px;">Y</span>
<span class="t" style="left:1326.12px;top:673.00px;color:#dcdcdc;font-size:12.3px;letter-spacing:-0.170px;">1.0</span>
<div class="b " style="left:1397.7px;top:669.3px;width:64.0px;height:23.7px;background:#1f2221;border-radius:0 2px 2px 0"></div>
<div class="b " style="left:1385.7px;top:669.3px;width:13.7px;height:23.7px;background:#5d94c2;border-radius:3px 1px 1px 3px"></div>
<span class="t" style="left:1388.87px;top:673.50px;color:#e8e8e8;font-size:13px;">Z</span>
<span class="t" style="left:1420.92px;top:673.00px;color:#dcdcdc;font-size:12.3px;letter-spacing:-0.170px;">1.0</span>
<div class="b " style="left:1277.3px;top:679.7px;width:4.4px;height:4.4px;background:#555;"></div>
<div class="b " style="left:1374px;top:679.7px;width:4.4px;height:4.4px;background:#555;"></div>
<div class="b " style="left:1470px;top:679.7px;width:4.4px;height:4.4px;background:#555;"></div>
<div class="b " style="left:1055px;top:719.7px;width:429px;height:65px;background:#363836;"></div>
<svg class="b" style="left:1061.5px;top:731px;" width="7" height="6" viewBox="0 0 7 6"><path d="M0 0 H7 L3.500 6 Z" fill="#d4d4d4"/></svg>
<span class="t" style="left:1076.00px;top:724.70px;color:#cfcfcf;font-size:13px;letter-spacing:-0.049px;">Materials on selected models</span>
<span class="t" style="left:1157.30px;top:754.00px;color:#959595;font-size:12.61px;letter-spacing:-0.105px;">Prim</span>
<div class="b " style="left:1206.7px;top:754px;width:271px;height:23px;background:#1f2221;border-radius:2px"></div>
<span class="t" style="left:1215.00px;top:756.50px;color:#d8d8d8;font-size:13.54px;letter-spacing:0.137px;">/World/target</span>
<div class="b " style="left:1071.3px;top:764px;width:75.4px;height:20.7px;background:#2c2e2d;"></div>
<svg class="b" style="left:1071px;top:764px;overflow:hidden" width="76" height="21" viewBox="0 0 76 21"><defs><radialGradient id="sp" cx="0.400" cy="0.250" r="0.800"><stop offset="0" stop-color="#e2e2e2"/><stop offset="1" stop-color="#8a8a8a"/></radialGradient></defs><circle cx="38.700" cy="36.900" r="25.200" fill="url(#sp)"/></svg>
<svg class="b" style="left:1098px;top:746px;" width="16" height="22" viewBox="0 0 16 22"><path d="M2 1.500 V17.500 L5.800 14 L8.500 20.200 L11 19 L8.300 13 H13.500 Z" fill="#1a1a1a" stroke="#f2f2f2" stroke-width="1.300" stroke-linejoin="round"/></svg>
<div class="b " style="left:0px;top:562px;width:81px;height:22px;background:#343434;border-radius:4px 4px 0 0"></div>
<span class="t" style="left:8.30px;top:565.00px;color:#8e8e8e;font-size:12.61px;letter-spacing:-0.109px;">Console</span>
<div class="b " style="left:86px;top:562px;width:84px;height:23px;background:#454645;border-radius:4px 4px 0 0"></div>
<span class="t" style="left:94.30px;top:565.00px;color:#cfcfcf;font-size:13.36px;letter-spacing:0.100px;">Content</span>
<div class="b " style="left:0px;top:584px;width:1046.7px;height:204.7px;background:#454645;"></div>
<div class="b " style="left:6.3px;top:594.1px;width:64.3px;height:23.8px;background:#232323;border-radius:4px"></div>
<svg class="b" style="left:8px;top:600px;" width="12" height="12" viewBox="0 0 12 12"><path d="M6 0 V12 M0 6 H12" stroke="#6cc06a" stroke-width="2"/></svg>
<span class="t" style="left:24.30px;top:598.00px;color:#d4d4d4;font-size:13px;letter-spacing:0.193px;">Import</span>
<svg class="b" style="left:82px;top:600.5px;" width="8" height="12" viewBox="0 0 8 12"><path d="M6.500 1 L1.500 6 L6.500 11" stroke="#5a5a5a" stroke-width="1.800" fill="none"/></svg>
<svg class="b" style="left:104.5px;top:600.5px;" width="8" height="12" viewBox="0 0 8 12"><path d="M1.500 1 L6.500 6 L1.500 11" stroke="#5a5a5a" stroke-width="1.800" fill="none"/></svg>
<div class="b " style="left:121px;top:593.7px;width:569px;height:25px;background:#1f2221;border-radius:2px"></div>
<span class="t" style="left:129.30px;top:597.50px;color:#d0d0d0;font-size:13px;letter-spacing:0.132px;">omniverse://</span>
<svg class="b" style="left:647.5px;top:601.3px;" width="11" height="9" viewBox="0 0 11 9"><path d="M0 0 H11 L5.500 9 Z" fill="#d0d0d0"/></svg>
<svg class="b" style="left:671px;top:597.3px;" width="14" height="19" viewBox="0 0 14 19"><path d="M0 0 H14 V18.500 L7 13 L0 18.500 Z" fill="#6a6a6a"/></svg>
<div class="b " style="left:693.3px;top:593.7px;width:299.4px;height:25px;background:#1f2221;border-radius:2px"></div>
<svg class="b" style="left:700.5px;top:598.5px;" width="12.600000000000001" height="13.65" viewBox="0 0 12 13"><circle cx="5" cy="5" r="3.900" fill="none" stroke="#c4c4c4" stroke-width="1.500"/><path d="M7.800 8 L11 11.800" stroke="#c4c4c4" stroke-width="1.800"/></svg>
<svg class="b" style="left:698.5px;top:609.5px;" width="4" height="4" viewBox="0 0 4 4"><path d="M0 0 V3.500 H3.500 Z" fill="#c4c4c4"/></svg>
<span class="t" style="left:730.00px;top:597.50px;color:#505254;font-size:12.61px;letter-spacing:-0.109px;">Search</span>
<svg class="b" style="left:999.5px;top:599.7px;" width="16" height="16" viewBox="0 0 16 16"><path d="M0 0.500 H13.500 L8.500 6.800 V13.500 L5.200 11 V6.800 Z" fill="#b8b8b8"/><path d="M15.500 11.500 V14.500 H12.500 Z" fill="#b8b8b8"/></svg>
<svg class="b" style="left:1022.7px;top:600px;" width="16.6" height="13.8" viewBox="0 0 16.6 13.8"><rect x="0" y="0.0" width="16.6" height="2.2" fill="#b8b8b8"/><rect x="0" y="5.3" width="16.6" height="2.2" fill="#b8b8b8"/><rect x="0" y="10.6" width="16.6" height="2.2" fill="#b8b8b8"/></svg>
<div class="b " style="left:4.2px;top:624.9px;width:301.8px;height:160px;background:#1f2221;"></div>
<div class="b " style="left:308.3px;top:624.9px;width:355px;height:160px;background:#1f2221;"></div>
<div class="b " style="left:13.4px;top:655px;width:1px;height:130px;background:#292c2e;"></div>
<div class="b" style="left:0;top:0;width:1047px;height:784.9px;overflow:hidden;clip-path:inset(624.9px 0 0 0)">
<svg class="b" style="left:14px;top:623.5px;" width="10" height="10" viewBox="0 0 10 10"><rect x="0.500" y="0.500" width="9" height="9" rx="1.500" fill="#b4b4b4"/><rect x="2.200" y="4.200" width="5.600" height="1.600" fill="#1f2221"/><rect x="4.200" y="2.200" width="1.600" height="5.600" fill="#1f2221"/></svg>
<svg class="b" style="left:31.9px;top:620px;" width="15" height="16" viewBox="0 0 15 16"><path d="M0 0 H14.300 V16 L7.150 10.500 L0 16 Z" fill="#d9d583"/></svg>
<span class="t" style="left:53.40px;top:620.00px;color:#bcbcbc;font-size:13px;letter-spacing:-0.059px;">Bookmarks</span>
<svg class="b" style="left:14px;top:643.4px;" width="10" height="10" viewBox="0 0 10 10"><rect x="0.500" y="0.500" width="9" height="9" rx="1.500" fill="#b4b4b4"/><rect x="2.200" y="4.200" width="5.600" height="1.600" fill="#1f2221"/></svg>
<svg class="b" style="left:30px;top:641.5px;" width="19" height="12" viewBox="0 0 19 12"><path d="M4.500 11.600 A3.800 3.800 0 0 1 3.800 4.200 A4.800 4.800 0 0 1 12.800 2.800 A4.500 4.500 0 0 1 14.500 11.600 Z" fill="#b4b4b4"/></svg>
<span class="t" style="left:53.40px;top:639.70px;color:#bcbcbc;font-size:12.54px;letter-spacing:-0.113px;">Isaac Sim</span>
<svg class="b" style="left:34.3px;top:663.2px;" width="10" height="10" viewBox="0 0 10 10"><rect x="0.500" y="0.500" width="9" height="9" rx="1.500" fill="#b4b4b4"/><rect x="2.200" y="4.200" width="5.600" height="1.600" fill="#1f2221"/><rect x="4.200" y="2.200" width="1.600" height="5.600" fill="#1f2221"/></svg>
<svg class="b" style="left:47.6px;top:659.2px;" width="21" height="16" viewBox="0 0 21 16"><path d="M8 3.800 H13 L14.200 5.200 H19.500 Q20.500 5.200 20.500 6.200 V13.500 Q20.500 14.500 19.500 14.500 H8 Z" fill="#a9abab"/><path d="M2.200 7 V4.800 A3.400 3.400 0 0 1 9 4.800 V7" fill="none" stroke="#e2506a" stroke-width="1.700"/><rect x="0.300" y="6.300" width="10.600" height="8.400" rx="1.300" fill="#e2506a"/></svg>
<span class="t" style="left:73.40px;top:659.70px;color:#bcbcbc;font-size:12.61px;letter-spacing:-0.109px;">Robots</span>
<svg class="b" style="left:34.3px;top:683.2px;" width="10" height="10" viewBox="0 0 10 10"><rect x="0.500" y="0.500" width="9" height="9" rx="1.500" fill="#b4b4b4"/><rect x="2.200" y="4.200" width="5.600" height="1.600" fill="#1f2221"/><rect x="4.200" y="2.200" width="1.600" height="5.600" fill="#1f2221"/></svg>
<svg class="b" style="left:47.6px;top:679.2px;" width="21" height="16" viewBox="0 0 21 16"><path d="M8 3.800 H13 L14.200 5.200 H19.500 Q20.500 5.200 20.500 6.200 V13.500 Q20.500 14.500 19.500 14.500 H8 Z" fill="#a9abab"/><path d="M2.200 7 V4.800 A3.400 3.400 0 0 1 9 4.800 V7" fill="none" stroke="#e2506a" stroke-width="1.700"/><rect x="0.300" y="6.300" width="10.600" height="8.400" rx="1.300" fill="#e2506a"/></svg>
<span class="t" style="left:73.40px;top:679.70px;color:#bcbcbc;font-size:13px;letter-spacing:0.068px;">Environments</span>
<svg class="b" style="left:34.3px;top:703.2px;" width="10" height="10" viewBox="0 0 10 10"><rect x="0.500" y="0.500" width="9" height="9" rx="1.500" fill="#b4b4b4"/><rect x="2.200" y="4.200" width="5.600" height="1.600" fill="#1f2221"/><rect x="4.200" y="2.200" width="1.600" height="5.600" fill="#1f2221"/></svg>
<svg class="b" style="left:47.6px;top:699.2px;" width="21" height="16" viewBox="0 0 21 16"><path d="M8 3.800 H13 L14.200 5.200 H19.500 Q20.500 5.200 20.500 6.200 V13.500 Q20.500 14.500 19.500 14.500 H8 Z" fill="#a9abab"/><path d="M2.200 7 V4.800 A3.400 3.400 0 0 1 9 4.800 V7" fill="none" stroke="#e2506a" stroke-width="1.700"/><rect x="0.300" y="6.300" width="10.600" height="8.400" rx="1.300" fill="#e2506a"/></svg>
<span class="t" style="left:73.40px;top:699.70px;color:#bcbcbc;font-size:12.72px;letter-spacing:-0.078px;">IsaacLab</span>
<svg class="b" style="left:34.3px;top:723.2px;" width="10" height="10" viewBox="0 0 10 10"><rect x="0.500" y="0.500" width="9" height="9" rx="1.500" fill="#b4b4b4"/><rect x="2.200" y="4.200" width="5.600" height="1.600" fill="#1f2221"/><rect x="4.200" y="2.200" width="1.600" height="5.600" fill="#1f2221"/></svg>
<svg class="b" style="left:47.6px;top:719.2px;" width="21" height="16" viewBox="0 0 21 16"><path d="M8 3.800 H13 L14.200 5.200 H19.500 Q20.500 5.200 20.500 6.200 V13.500 Q20.500 14.500 19.500 14.500 H8 Z" fill="#a9abab"/><path d="M2.200 7 V4.800 A3.400 3.400 0 0 1 9 4.800 V7" fill="none" stroke="#e2506a" stroke-width="1.700"/><rect x="0.300" y="6.300" width="10.600" height="8.400" rx="1.300" fill="#e2506a"/></svg>
<span class="t" style="left:73.40px;top:719.70px;color:#bcbcbc;font-size:13px;letter-spacing:0.061px;">Materials</span>
<svg class="b" style="left:34.3px;top:743.2px;" width="10" height="10" viewBox="0 0 10 10"><rect x="0.500" y="0.500" width="9" height="9" rx="1.500" fill="#b4b4b4"/><rect x="2.200" y="4.200" width="5.600" height="1.600" fill="#1f2221"/><rect x="4.200" y="2.200" width="1.600" height="5.600" fill="#1f2221"/></svg>
<svg class="b" style="left:47.6px;top:739.2px;" width="21" height="16" viewBox="0 0 21 16"><path d="M8 3.800 H13 L14.200 5.200 H19.500 Q20.500 5.200 20.500 6.200 V13.500 Q20.500 14.500 19.500 14.500 H8 Z" fill="#a9abab"/><path d="M2.200 7 V4.800 A3.400 3.400 0 0 1 9 4.800 V7" fill="none" stroke="#e2506a" stroke-width="1.700"/><rect x="0.300" y="6.300" width="10.600" height="8.400" rx="1.300" fill="#e2506a"/></svg>
<span class="t" style="left:73.40px;top:739.70px;color:#bcbcbc;font-size:12.33px;letter-spacing:-0.182px;">People</span>
<svg class="b" style="left:34.3px;top:763.2px;" width="10" height="10" viewBox="0 0 10 10"><rect x="0.500" y="0.500" width="9" height="9" rx="1.500" fill="#b4b4b4"/><rect x="2.200" y="4.200" width="5.600" height="1.600" fill="#1f2221"/><rect x="4.200" y="2.200" width="1.600" height="5.600" fill="#1f2221"/></svg>
<svg class="b" style="left:47.6px;top:759.2px;" width="21" height="16" viewBox="0 0 21 16"><path d="M8 3.800 H13 L14.200 5.200 H19.500 Q20.500 5.200 20.500 6.200 V13.500 Q20.500 14.500 19.500 14.500 H8 Z" fill="#a9abab"/><path d="M2.200 7 V4.800 A3.400 3.400 0 0 1 9 4.800 V7" fill="none" stroke="#e2506a" stroke-width="1.700"/><rect x="0.300" y="6.300" width="10.600" height="8.400" rx="1.300" fill="#e2506a"/></svg>
<span class="t" style="left:73.40px;top:759.70px;color:#bcbcbc;font-size:12.33px;letter-spacing:-0.184px;">Props</span>
<svg class="b" style="left:34.3px;top:783.2px;" width="10" height="10" viewBox="0 0 10 10"><rect x="0.500" y="0.500" width="9" height="9" rx="1.500" fill="#b4b4b4"/><rect x="2.200" y="4.200" width="5.600" height="1.600" fill="#1f2221"/><rect x="4.200" y="2.200" width="1.600" height="5.600" fill="#1f2221"/></svg>
<svg class="b" style="left:47.6px;top:779.2px;" width="21" height="16" viewBox="0 0 21 16"><path d="M8 3.800 H13 L14.200 5.200 H19.500 Q20.500 5.200 20.500 6.200 V13.500 Q20.500 14.500 19.500 14.500 H8 Z" fill="#a9abab"/><path d="M2.200 7 V4.800 A3.400 3.400 0 0 1 9 4.800 V7" fill="none" stroke="#e2506a" stroke-width="1.700"/><rect x="0.300" y="6.300" width="10.600" height="8.400" rx="1.300" fill="#e2506a"/></svg>
<span class="t" style="left:73.40px;top:779.70px;color:#bcbcbc;font-size:13px;letter-spacing:-0.083px;">Samples</span>
</div>
<div class="b " style="left:296.7px;top:631.3px;width:6px;height:76.7px;background:#9c9e9c;border-radius:3px"></div>
<div class="b " style="left:0px;top:784.7px;width:1046.7px;height:4px;background:#454645;"></div>
<svg class="b" style="left:336px;top:658px;" width="64" height="35" viewBox="0 0 64 35"><defs><linearGradient id="d1" x1="0" y1="0" x2="1" y2="1"><stop offset="0" stop-color="#8e8e8c"/><stop offset="1" stop-color="#b4b4b2"/></linearGradient></defs>
<path d="M2 12 L34 3 L61.200 9.300 L29.700 19.800 Z" fill="url(#d1)"/>
<path d="M2 12 L29.700 19.800 V32 L2 21.900 Z" fill="#7a7a78"/><path d="M4 14.500 L27.800 21.200 V29.300 L4 20.800 Z" fill="#8c8c8a"/>
<path d="M29.700 19.800 L61.200 9.300 V17.700 L29.700 32 Z" fill="#b2b2b0"/><path d="M29.700 19.800 L33 18.700 V30.500 L29.700 32 Z" fill="#9c9c9a"/>
<circle cx="23.200" cy="24.700" r="2.100" fill="#cbe21e"/></svg>
<span class="t" style="left:327.56px;top:708.60px;color:#a2a2a2;font-size:12.63px;letter-spacing:-0.086px;">isaac-dev.ov.</span>
<span class="t" style="left:332.32px;top:725.00px;color:#a2a2a2;font-size:13px;letter-spacing:-0.154px;">nvidia.com</span>
<div class="b " style="left:469.3px;top:763px;width:177.4px;height:19.3px;background:#3c3e3e;border-radius:3px"></div>
<div class="b " style="left:478px;top:766px;width:142.7px;height:13.5px;background:#232526;border-radius:3px"></div>
<div class="b " style="left:526.7px;top:768px;width:23.3px;height:11.7px;background:#b0b0b0;border-radius:5px"></div>
<svg class="b" style="left:625px;top:766.3px;" width="16" height="14" viewBox="0 0 16 14"><rect x="0" y="0" width="4" height="3.200" fill="#b0b0b0"/><rect x="5.200" y="0" width="10.800" height="3.200" fill="#b0b0b0"/><rect x="0" y="5" width="4" height="3.200" fill="#b0b0b0"/><rect x="5.200" y="5" width="10.800" height="3.200" fill="#b0b0b0"/><rect x="0" y="10" width="4" height="3.200" fill="#b0b0b0"/><rect x="5.200" y="10" width="10.800" height="3.200" fill="#b0b0b0"/></svg>
<div class="b " style="left:665.5px;top:624.9px;width:377.5px;height:160px;background:#1f2221;"></div>
<div class="b " style="left:669.2px;top:626.4px;width:357.5px;height:102.4px;background:#323432;"></div>
<div class="b " style="left:669.2px;top:732px;width:357.5px;height:52.6px;background:#323432;"></div>
<svg class="b" style="left:678.3px;top:638px;" width="8" height="5" viewBox="0 0 8 5"><path d="M0 0 H7.400 L3.700 4.400 Z" fill="#b0b0b0"/></svg>
<div class="b " style="left:672px;top:656px;width:354.7px;height:1.2px;background:#4c4e4c;"></div>
<span class="t" style="left:672.30px;top:658.30px;color:#a4a4a4;font-size:13px;letter-spacing:-0.040px;">Date Modified</span>
<span class="t" style="left:672.30px;top:674.43px;color:#a4a4a4;font-size:13px;letter-spacing:-0.159px;">Created by</span>
<span class="t" style="left:672.30px;top:690.56px;color:#a4a4a4;font-size:13px;letter-spacing:-0.135px;">Modified by</span>
<span class="t" style="left:672.30px;top:706.69px;color:#a4a4a4;font-size:12.15px;letter-spacing:-0.170px;">File size</span>
<span class="t" style="left:905.85px;top:658.30px;color:#a4a4a4;font-size:13px;letter-spacing:-0.151px;">02/25/2026 01:14PM</span>
<span class="t" style="left:980.84px;top:706.70px;color:#a4a4a4;font-size:12.4px;letter-spacing:-0.156px;">0.00 KB</span>
<svg class="b" style="left:678.3px;top:742.5px;" width="8" height="5" viewBox="0 0 8 5"><path d="M0 0 H7.400 L3.700 4.400 Z" fill="#b0b0b0"/></svg>
<span class="t" style="left:692.30px;top:735.70px;color:#d0d0d0;font-size:13px;letter-spacing:0.025px;">File Information</span>
<div class="b " style="left:672px;top:760.3px;width:354.7px;height:1.2px;background:#4c4e4c;"></div>
<span class="t" style="left:672.30px;top:764.00px;color:#a4a4a4;font-size:13px;letter-spacing:0.109px;">No Additional Information</span>
<div class="b " style="left:1034.3px;top:628px;width:5.7px;height:66px;background:#9c9e9c;border-radius:3px"></div>
<div class="b " style="left:0px;top:792.7px;width:1500px;height:29.3px;background:#464746;"></div>
</div>
</body></html>
